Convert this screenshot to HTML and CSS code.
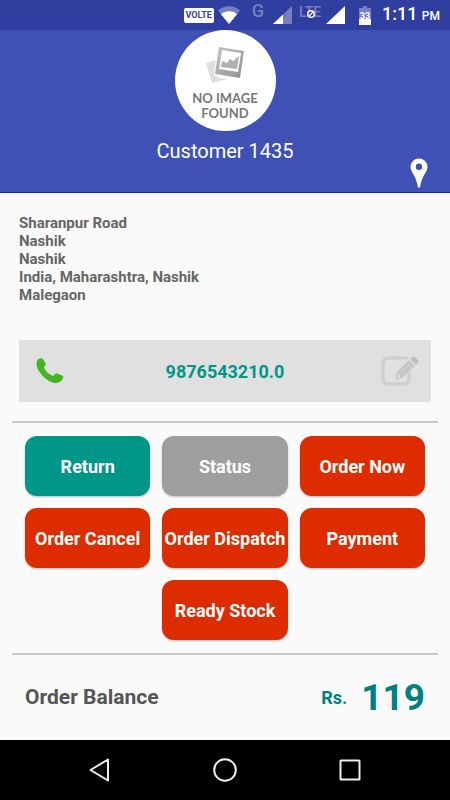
FILE: index.html
```html
<!DOCTYPE html>
<html lang="en">
<head>
    <meta charset="UTF-8">
    <meta name="viewport" content="width=device-width, initial-scale=1.0">
    <title>Customer 1435</title>
    <link rel="stylesheet" href="styles.css">
</head>
<body>

    <!-- Status bar -->
    <div class="status-bar">
        <span class="volte">VOLTE</span>
        <svg class="wifi" width="22" height="18" viewBox="0 0 22 18">
            <path d="M0 4.5C6.5-1.2 15.500-1.200 22 4.500L11 18z" fill="#7680c0"/>
            <path d="M3 8.200C7.500 4.400 14.500 4.400 19 8.200L11 18z" fill="#fff"/>
        </svg>
        <span class="network">G</span>
        <svg class="signal" width="19" height="18" viewBox="0 0 19 18">
            <path d="M19 0v18H0z" fill="#7680c0"/>
            <path d="M10 8.500V18H0z" fill="#fff"/>
        </svg>
        <span class="network lte">LTE
            <svg class="blocked" width="10" height="10" viewBox="0 0 10 10">
                <circle cx="5" cy="5" r="3.300" fill="#303f9f" stroke="#fff" stroke-width="1.500"/>
                <path d="M3 7l4-4" stroke="#fff" stroke-width="1.300"/>
            </svg>
        </span>
        <svg class="signal-full" width="19" height="18" viewBox="0 0 19 18">
            <path d="M19 0v18H0z" fill="#fff"/>
        </svg>
        <svg class="battery" width="12" height="19" viewBox="0 0 12 19">
            <path d="M4 0h4v2h4v17H0V2h4z" fill="#7680c0"/>
            <path d="M0 13h12v6H0z" fill="#fff"/>
            <text x="6" y="13" text-anchor="middle">33</text>
        </svg>
        <span class="clock">1:11 <small>PM</small></span>
    </div>

    <!-- Header -->
    <header class="header">
        <div class="profile">
            <div class="avatar">
                <svg width="40" height="37" viewBox="0 0 40 37">
                    <defs>
                        <linearGradient id="photo" x1="0" y1="0" x2="1" y2="1">
                            <stop offset="0" stop-color="#c4c4c4"/>
                            <stop offset="1" stop-color="#929292"/>
                        </linearGradient>
                    </defs>
                    <path d="M1 17l13-4v19l9 1-16 4z" fill="#dedede"/>
                    <path d="M12 0l28 4-4 30-27-4z" fill="#fff"/>
                    <path d="M14 1l25 4-4 27-25-4z" fill="url(#photo)"/>
                    <path d="M17 4l19 3-3 19-19-3z" fill="#fff"/>
                    <path d="M16 21l1-6 5 2 3-4 3 2 6-5-2 13z" fill="#b0b0b0"/>
                </svg>
                <span>NO IMAGE<br>FOUND</span>
            </div>
            <h1>Customer 1435</h1>
        </div>
        <a class="location" href="#" aria-label="Location">
            <svg width="18" height="30" viewBox="0 0 18 30">
                <path fill-rule="evenodd" d="M9 0.500a8.500 8.500 0 0 1 8.500 8.500c0 5-6 9-7.500 20.500H8C6.500 18 0.500 14 0.500 9A8.500 8.500 0 0 1 9 0.500zm0 5a3.200 3.200 0 1 0 0 6.400 3.200 3.200 0 0 0 0-6.400z" fill="#fff"/>
            </svg>
        </a>
    </header>

    <!-- Customer details -->
    <main>
        <address>
            Sharanpur Road<br>
            Nashik<br>
            Nashik<br>
            India, Maharashtra, Nashik<br>
            Malegaon
        </address>

        <div class="phone">
            <button class="icon-btn" aria-label="Call">
                <svg width="28" height="26" viewBox="0 0 28 26">
                    <path d="M2 1.500C4 0 6 0 7 1l2.500 4.500c.5 1 0 2-.8 2.700C7.500 9.200 8 10 9 11.500c1.800 2.800 4 4.500 7 6 1 .5 1.500.4 2-.3l1.400-1.500c.5-.5 1.200-.5 2-.2l4.600 1.900c1.200.5 1.500 1.300 1.100 2.400-.8 3-3.800 5.200-7.100 5.200-4 0-9-3-12.800-6.600C3.500 14.500.5 10 .5 5.500c0-1.500.4-3 1.500-4z" fill="#42b520"/>
                </svg>
            </button>
            <a href="tel:9876543210">9876543210.0</a>
            <button class="icon-btn edit" aria-label="Edit">
                <svg width="38" height="34" viewBox="0 0 38 34" fill="none">
                    <path d="M26 4H8C4 4 2 6 2 10v14c0 4 2 6 6 6h14c4 0 6-2 6-6v-4" stroke="#cfcfcf" stroke-width="3.500" stroke-linecap="round"/>
                    <path d="M15 19L28 6l6 6-13 12-6 2z" fill="#c6c6c6"/>
                    <path d="M29 5l2-2c1-1 2-1 3 0l3 3c1 1 1 2 0 3l-2 2z" fill="#c0c0c0"/>
                    <path d="M17 20l3 3-4 1z" fill="#e0e0e0"/>
                    <path d="M20 18l9-8" stroke="#d4d4d4"/>
                </svg>
            </button>
        </div>

        <div class="actions">
            <button class="btn return">Return</button>
            <button class="btn status">Status</button>
            <button class="btn">Order Now</button>
            <button class="btn">Order Cancel</button>
            <button class="btn">Order Dispatch</button>
            <button class="btn">Payment</button>
            <button class="btn ready">Ready Stock</button>
        </div>

        <div class="balance">
            <h2>Order Balance</h2>
            <span class="currency">Rs.</span>
            <span class="amount">119</span>
        </div>
    </main>

    <!-- Navigation bar -->
    <nav class="nav-bar">
        <button aria-label="Back">
            <svg width="26" height="26" viewBox="0 0 26 26"><path d="M21 2.500v21L3.500 13z"/></svg>
        </button>
        <button aria-label="Home">
            <svg width="26" height="26" viewBox="0 0 26 26"><circle cx="13" cy="13" r="10.800"/></svg>
        </button>
        <button aria-label="Recent apps">
            <svg width="26" height="26" viewBox="0 0 26 26"><rect x="3.500" y="3.500" width="19" height="19" rx="0.500"/></svg>
        </button>
    </nav>

</body>
</html>
```
FILE: styles.css
```css
/* General styles */
* {
    box-sizing: border-box;
}

body {
    font-family: Roboto, "Liberation Sans", sans-serif;
    margin: 0;
    min-height: 100vh;
    display: flex;
    flex-direction: column;
    background-color: #fafafa;
}

h1, h2 {
    margin: 0;
}

button {
    font-family: inherit;
    border: none;
    padding: 0;
    cursor: pointer;
}

svg {
    display: block;
}

/* Status bar */
.status-bar {
    display: flex;
    align-items: center;
    justify-content: flex-end;
    height: 30px;
    padding-right: 10px;
    background-color: #303f9f;
    color: white;
}

.volte {
    width: 30px;
    margin-right: 4px;
    border-radius: 2px;
    background-color: white;
    color: #303f9f;
    font-size: 9px;
    font-weight: 700;
    line-height: 15px;
    text-align: center;
}

.wifi {
    margin-right: 12px;
}

.network {
    align-self: flex-start;
    color: #7680c0;
    font-size: 18px;
    font-weight: 500;
    line-height: 22px;
}

.signal {
    margin: 0 7px 0 9px;
}

.lte {
    position: relative;
    width: 23px;
    font-size: 14px;
    line-height: 24px;
}

.blocked {
    position: absolute;
    top: 9px;
    left: 7px;
}

.signal-full {
    margin: 0 14px 0 4px;
}

.battery {
    margin-right: 11px;
}

.battery text {
    fill: white;
    font-size: 9px;
    font-weight: 700;
}

.clock {
    font-size: 18px;
    font-weight: 500;
    line-height: 30px;
    white-space: nowrap;
}

.clock small {
    font-size: 12px;
}

/* Header */
.header {
    display: grid;
    grid-template-columns: 1fr auto 1fr;
    padding-bottom: 4px;
    border-bottom: 1px solid #0d2aa0;
    background-color: #3f51b5;
    color: white;
}

.profile {
    grid-column: 2;
    display: flex;
    flex-direction: column;
    align-items: center;
    padding-bottom: 23px;
}

.avatar {
    display: flex;
    flex-direction: column;
    align-items: center;
    width: 101px;
    height: 101px;
    padding-top: 16px;
    border-radius: 50%;
    background-color: white;
    color: #777;
    font-family: Lato, sans-serif;
    font-size: 13px;
    font-weight: 700;
    line-height: 15px;
    text-align: center;
}

.avatar span {
    margin-top: 8px;
}

.header h1 {
    margin-top: 6px;
    font-size: 20px;
    font-weight: 400;
    line-height: 28px;
}

.location {
    justify-self: end;
    align-self: end;
    margin-right: 22px;
}

/* Customer details */
main {
    flex-grow: 1;
    padding: 21px 12px 0;
}

address {
    margin: 0 7px 36px;
    color: #666;
    font-size: 15px;
    font-style: normal;
    font-weight: 700;
    line-height: 18px;
}

.phone {
    display: grid;
    grid-template-columns: 1fr auto 1fr;
    align-items: center;
    height: 62px;
    margin: 0 7px 19px;
    padding: 0 12px;
    background-color: #e0e0e0;
}

.phone a {
    color: #009688;
    font-size: 18px;
    font-weight: 700;
    text-decoration: none;
}

.icon-btn {
    justify-self: start;
    padding-left: 5px;
    background: none;
}

.edit {
    justify-self: end;
}

/* Action buttons */
.actions {
    display: grid;
    grid-template-columns: repeat(3, 1fr);
    grid-auto-rows: 60px;
    gap: 12px;
    padding: 13px;
    border-top: 2px solid #c8c8c8;
    border-bottom: 2px solid #c8c8c8;
}

.btn {
    border-radius: 12px;
    background-color: #dd2c00;
    box-shadow: 0 1px 2px rgba(0, 0, 0, 0.25);
    color: white;
    font-size: 18px;
    font-weight: 700;
    white-space: nowrap;
}

.return {
    background-color: #009688;
}

.status {
    background-color: #9e9e9e;
}

.ready {
    grid-column: 2;
}

/* Order balance */
.balance {
    display: flex;
    align-items: center;
    height: 84px;
    padding: 0 13px;
    color: #008080;
}

.balance h2 {
    margin-right: auto;
    color: #555;
    font-size: 21px;
    font-weight: 700;
}

.currency {
    margin-right: 14px;
    font-size: 18px;
    font-weight: 700;
}

.amount {
    font-size: 37px;
    font-weight: 700;
}

/* Navigation bar */
.nav-bar {
    display: flex;
    align-items: center;
    justify-content: center;
    gap: 99px;
    height: 60px;
    background-color: black;
}

.nav-bar button {
    background: none;
}

.nav-bar svg {
    fill: none;
    stroke: #eee;
    stroke-width: 2;
    stroke-linejoin: round;
}
```
